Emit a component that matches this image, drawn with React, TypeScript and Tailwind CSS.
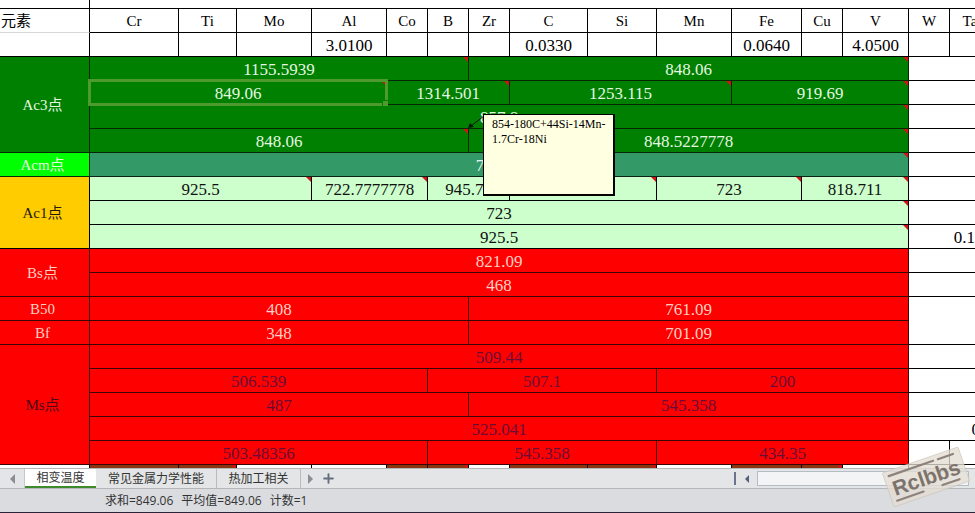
import React from 'react';
import { Plus } from 'lucide-react';

interface Cell {
  text?: string;
  span?: number;
  rows?: number;
  tone?: string;
  note?: boolean;
  selected?: boolean;
  comment?: string;
}

interface Row {
  head?: { text: string; rows: number; tone: string };
  cells: Cell[];
  // cells to the right of column V
  tail: Cell[];
}

const GREEN = 'bg-[#008000] text-[#e4f7e0] border-[#062806]';
const TEAL = 'bg-[#339966] text-[#e6f5ec] border-[#0c2418]';
const MINT = 'bg-[#ccffcc] text-[#101010] border-black';
const RED = 'bg-[#ff0000] text-[#ffcfc4] border-[#3a0505]';
const DARK = 'bg-[#ff0000] text-[#6a0c38] border-[#3a0505]';
const PLAIN = 'bg-white text-black border-black';
const BROWN = 'bg-[#8b3510] border-black';

const columns = [
  { name: 'Cr', width: 'w-[89px]', value: '' },
  { name: 'Ti', width: 'w-[58px]', value: '' },
  { name: 'Mo', width: 'w-[75px]', value: '' },
  { name: 'Al', width: 'w-[75px]', value: '3.0100' },
  { name: 'Co', width: 'w-[41px]', value: '' },
  { name: 'B', width: 'w-[41px]', value: '' },
  { name: 'Zr', width: 'w-[41px]', value: '' },
  { name: 'C', width: 'w-[78px]', value: '0.0330' },
  { name: 'Si', width: 'w-[69px]', value: '' },
  { name: 'Mn', width: 'w-[75px]', value: '' },
  { name: 'Fe', width: 'w-[70px]', value: '0.0640' },
  { name: 'Cu', width: 'w-[41px]', value: '' },
  { name: 'V', width: 'w-[66px]', value: '4.0500' },
  { name: 'W', width: 'w-[41px]', value: '' },
  { name: 'Ta', width: 'w-[41px]', value: '' },
];

const blank: Cell[] = [{ span: 2 }];

const rows: Row[] = [
  {
    head: { text: 'Ac3点', rows: 4, tone: GREEN },
    cells: [
      { text: '1155.5939', span: 6, tone: GREEN, note: true },
      { text: '848.06', span: 7, tone: GREEN, note: true },
    ],
    tail: blank,
  },
  {
    cells: [
      { text: '849.06', span: 4, tone: GREEN, note: true, selected: true },
      { text: '1314.501', span: 3, tone: GREEN, note: true },
      { text: '1253.115', span: 3, tone: GREEN, note: true },
      { text: '919.69', span: 3, tone: GREEN, note: true },
    ],
    tail: blank,
  },
  { cells: [{ text: '857.8', span: 13, tone: GREEN, note: true }], tail: blank },
  {
    cells: [
      { text: '848.06', span: 6, tone: GREEN, note: true, comment: '854-180C+44Si-14Mn-1.7Cr-18Ni' },
      { text: '848.5227778', span: 7, tone: GREEN, note: true },
    ],
    tail: blank,
  },
  {
    head: { text: 'Acm点', rows: 1, tone: 'bg-[#00ff00] text-[#e4ffe0] border-[#062806]' },
    cells: [{ text: '723.00', span: 13, tone: TEAL, note: true }],
    tail: blank,
  },
  {
    head: { text: 'Ac1点', rows: 3, tone: 'bg-[#ffcc00] text-[#241a10] border-black' },
    cells: [
      { text: '925.5', span: 3, tone: MINT, note: true },
      { text: '722.7777778', span: 2, tone: MINT, note: true },
      { text: '945.75', span: 2, tone: MINT, note: true },
      { span: 2, tone: MINT, note: true },
      { text: '723', span: 2, tone: MINT, note: true },
      { text: '818.711', span: 2, tone: MINT, note: true },
    ],
    tail: blank,
  },
  { cells: [{ text: '723', span: 13, tone: MINT, note: true }], tail: blank },
  { cells: [{ text: '925.5', span: 13, tone: MINT, note: true }], tail: [{ span: 2, text: '0.1', tone: 'bg-white text-black border-black text-right pr-[15px]' }] },
  {
    head: { text: 'Bs点', rows: 2, tone: RED },
    cells: [{ text: '821.09', span: 13, tone: RED }],
    tail: blank,
  },
  { cells: [{ text: '468', span: 13, tone: RED }], tail: blank },
  {
    head: { text: 'B50', rows: 1, tone: RED },
    cells: [{ text: '408', span: 6, tone: RED }, { text: '761.09', span: 7, tone: RED }],
    tail: [{ span: 2, rows: 2 }],
  },
  {
    head: { text: 'Bf', rows: 1, tone: RED },
    cells: [{ text: '348', span: 6, tone: RED }, { text: '701.09', span: 7, tone: RED }],
    tail: [],
  },
  {
    head: { text: 'Ms点', rows: 5, tone: 'bg-[#ff0000] text-[#4a0818] border-[#3a0505]' },
    cells: [{ text: '509.44', span: 13, tone: DARK }],
    tail: blank,
  },
  {
    cells: [
      { text: '506.539', span: 5, tone: DARK },
      { text: '507.1', span: 4, tone: DARK },
      { text: '200', span: 4, tone: DARK },
    ],
    tail: blank,
  },
  { cells: [{ text: '487', span: 6, tone: DARK }, { text: '545.358', span: 7, tone: DARK }], tail: blank },
  { cells: [{ text: '525.041', span: 13, tone: DARK }], tail: [{ span: 2, text: '0', tone: 'bg-white text-black border-black text-right pr-[10px]' }] },
  {
    cells: [
      { text: '503.48356', span: 5, tone: DARK },
      { text: '545.358', span: 4, tone: DARK },
      { text: '434.35', span: 4, tone: DARK },
    ],
    tail: [{}, {}],
  },
  {
    head: { text: '', rows: 1, tone: PLAIN },
    cells: [
      { tone: BROWN },
      { tone: BROWN, note: true },
      {},
      {},
      { tone: BROWN },
      { tone: BROWN, note: true },
      {},
      { tone: BROWN },
      { tone: BROWN, note: true },
      {},
      { tone: BROWN },
      { tone: BROWN, note: true },
      {},
    ],
    tail: [{}, {}],
  },
];

const CommentBox: React.FC<{ text: string }> = ({ text }) => (
  <>
    <svg className="absolute left-full -top-[15px] z-20 h-[18px] w-[18px]" viewBox="0 0 18 18">
      <path d="M16 2L3 12" stroke="#0a140a" strokeWidth="1" />
      <path d="M0 14L2 9L6 13Z" fill="#0a140a" />
    </svg>
    <div className="absolute left-full -top-[15px] z-20 ml-[15px] h-[82px] w-[132px] border border-r-2 border-b-2 border-black bg-[#ffffe1] pt-[2px] pr-1 pl-2 text-left text-[12px] leading-[15px] text-black">
      {text}
    </div>
  </>
);

const GridCell: React.FC<{ cell: Cell }> = ({ cell }) => (
  <td
    colSpan={cell.span ?? 1}
    rowSpan={cell.rows ?? 1}
    className={`relative border-r border-b p-0 pt-[2px] ${cell.tone ?? PLAIN}`}
  >
    {cell.text}
    {cell.note && (
      <span className="absolute top-0 right-0 h-[5px] w-[5px] bg-[#d01414] [clip-path:polygon(0_0,100%_0,100%_100%)]"></span>
    )}
    {cell.selected && (
      <span className="pointer-events-none absolute -inset-x-[2px] -inset-y-[2px] z-10 border-[3px] border-[#4f9a2e]">
        <span className="absolute -right-[3px] -bottom-[3px] h-[6px] w-[6px] border-t border-l border-[#008000] bg-[#4f9a2e]"></span>
      </span>
    )}
    {cell.comment && <CommentBox text={cell.comment} />}
  </td>
);

const Sheet: React.FC = () => (
  <table className="w-full min-w-[991px] table-fixed border-separate border-spacing-0 text-center font-['Liberation_Serif','Noto_Sans_CJK_SC',serif] text-[17px] leading-[21px]">
    <colgroup>
      <col className="w-[90px]" />
      {columns.map((c) => (
        <col key={c.name} className={c.width} />
      ))}
      <col />
    </colgroup>
    <thead>
      <tr className="h-[9px]">
        <td className="border-r border-b border-black p-0"></td>
        <td colSpan={16} className="border-b border-black p-0"></td>
      </tr>
      <tr className="h-6">
        <th className="border-r border-b border-r-black border-b-[#d8d8d8] p-0 pt-[2px] pl-px text-left text-[15px] font-normal">元素</th>
        {columns.map((c) => (
          <th key={c.name} scope="col" className="border-r border-b border-black p-0 pt-[2px] text-[15px] font-normal">{c.name}</th>
        ))}
        <td className="border-b border-black p-0"></td>
      </tr>
      <tr className="h-6">
        <td className="border-r border-b border-black p-0"></td>
        {columns.map((c) => (
          <td key={c.name} className="border-r border-b border-black p-0 pt-[2px]">{c.value}</td>
        ))}
        <td className="border-b border-black p-0"></td>
      </tr>
    </thead>
    <tbody>
      {rows.map((row, i) => (
        <tr key={i} className="h-6">
          {row.head && (
            <th scope="rowgroup" rowSpan={row.head.rows} className={`border-r border-b p-0 pt-[2px] pr-1 text-[15px] font-normal ${row.head.tone}`}>
              {row.head.text}
            </th>
          )}
          {[...row.cells, ...row.tail].map((cell, j) => (
            <GridCell key={j} cell={cell} />
          ))}
          <td className="border-b border-black p-0"></td>
        </tr>
      ))}
    </tbody>
  </table>
);

const TabBar: React.FC = () => (
  <div className="flex h-[21px] shrink-0 items-stretch border-t border-b border-[#b4b6b8] bg-[#e3e5e6] text-[12px] leading-[18px] text-[#333]">
    <button aria-label="上一个" className="flex w-[25px] items-center justify-center border-r border-[#c6c8ca]">
      <svg width="5" height="10" viewBox="0 0 5 10"><path d="M5 0V10L0 5Z" fill="#8a8d91" /></svg>
    </button>
    <div role="tablist" className="flex">
      <button role="tab" aria-selected="true" className="w-[71px] border-b-2 border-[#3f8a2c] bg-white">相变温度</button>
      <button role="tab" aria-selected="false" className="w-[121px] border-r border-[#b9bbbd]">常见金属力学性能</button>
      <button role="tab" aria-selected="false" className="w-[84px] border-r border-[#b9bbbd]">热加工相关</button>
    </div>
    <button aria-label="下一个" className="flex w-[18px] items-center justify-center">
      <svg width="5" height="10" viewBox="0 0 5 10"><path d="M0 0V10L5 5Z" fill="#8a8d91" /></svg>
    </button>
    <button aria-label="新建工作表" className="flex w-[18px] items-center justify-center">
      <Plus size={15} strokeWidth={3} color="#66707c" />
    </button>
    <div className="flex-1"></div>
    <div className="my-[3px] w-[2px] bg-[#6b7390]"></div>
    <button aria-label="向左滚动" className="flex w-[21px] items-center justify-center pr-2 pl-2">
      <svg width="4" height="8" viewBox="0 0 4 8"><path d="M4 0V8L0 4Z" fill="#555f7c" /></svg>
    </button>
    <div className="my-[2px] w-[212px] border border-[#b4bcc4] bg-[#f3f4f5]"></div>
    <div className="w-[6px]"></div>
  </div>
);

const Stamp: React.FC = () => (
  <svg className="pointer-events-none absolute right-0 bottom-0 z-30 h-[76px] w-[100px]" viewBox="0 0 100 76">
    <g transform="translate(51 40) rotate(-19)">
      <rect x="-40" y="-18" width="80" height="36" rx="1" fill="#e3dcd2" fillOpacity="0.78" stroke="#cbc3b9" strokeWidth="0.6" />
      <g stroke="#8d837c" strokeWidth="2.2" strokeLinecap="round">
        <path d="M-35 -13H12M17 -13H33" />
        <path d="M-35 13H-7M13 13H31" />
      </g>
      <text x="0" y="8" textAnchor="middle" fill="#7d736d" className="font-['Liberation_Sans',sans-serif] text-[21px] font-bold">Rclbbs</text>
    </g>
  </svg>
);

const App: React.FC = () => {
  return (
    <div className="relative flex h-screen flex-col overflow-hidden bg-white font-['Open_Sans','Noto_Sans_CJK_SC',sans-serif]">
      <main className="min-h-0 flex-1 overflow-hidden">
        <Sheet />
      </main>
      <TabBar />
      <footer className="flex h-6 shrink-0 items-center gap-2 border-b border-[#2a2438] bg-[#dadce0] pl-[105px] text-[12px] leading-[18px] text-[#333]">
        <span>求和=849.06</span>
        <span>平均值=849.06</span>
        <span>计数=1</span>
      </footer>
      <Stamp />
    </div>
  );
};

export default App;
